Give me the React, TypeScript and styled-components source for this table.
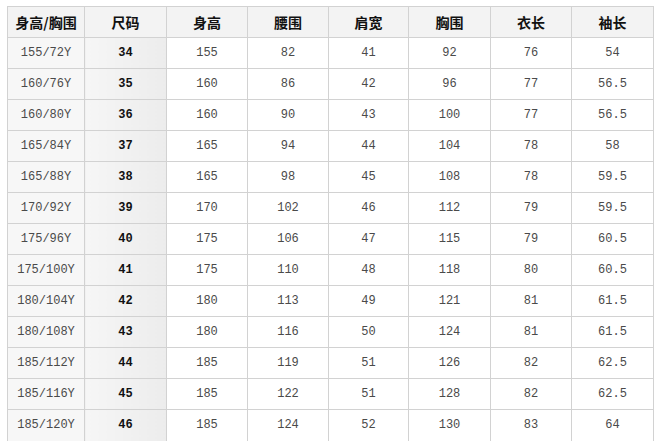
import React from "react";
import styled, { createGlobalStyle } from "styled-components";

const GlobalStyle = createGlobalStyle`
  html, body {
    margin: 0;
    padding: 0;
    background: #fff;
  }
`;

const Page = styled.div`
  width: 661px;
  height: 445px;
  overflow: hidden;
  padding: 6px 0 0 7px;
  box-sizing: border-box;
`;

const SizeTable = styled.table`
  border-collapse: collapse;
  table-layout: fixed;
  width: 646px;

  tbody tr:last-child td {
    border-bottom-color: transparent;
  }
`;

const HeadCell = styled.th`
  height: 30px;
  padding: 0;
  border: 1px solid #d2d2d2;
  background: #f3f3f3;
  color: #111;
  font-family: "Noto Sans CJK SC", "Noto Sans", sans-serif;
  font-size: 14px;
  font-weight: 700;
  text-align: center;
  vertical-align: middle;
`;

const Cell = styled.td<{ $kind?: "label" | "size" }>`
  height: 30px;
  padding: 0;
  border: 1px solid #d2d2d2;
  text-align: center;
  vertical-align: middle;
  font-family: "Liberation Mono", "DejaVu Sans Mono", monospace;
  font-size: 12px;
  font-weight: ${(p) => (p.$kind === "size" ? 700 : 400)};
  color: ${(p) => (p.$kind === "size" ? "#111" : "#4a4a4a")};
  background: ${(p) =>
    p.$kind === "label"
      ? "#f7f7f7"
      : p.$kind === "size"
      ? "linear-gradient(to right, #f6f6f6, #ececec)"
      : "#fff"};
`;

const widths = [77, 82, 81, 81, 80, 82, 81, 82];
const headers = ["身高/胸围", "尺码", "身高", "腰围", "肩宽", "胸围", "衣长", "袖长"];

const rows: string[][] = [
  ["155/72Y", "34", "155", "82", "41", "92", "76", "54"],
  ["160/76Y", "35", "160", "86", "42", "96", "77", "56.5"],
  ["160/80Y", "36", "160", "90", "43", "100", "77", "56.5"],
  ["165/84Y", "37", "165", "94", "44", "104", "78", "58"],
  ["165/88Y", "38", "165", "98", "45", "108", "78", "59.5"],
  ["170/92Y", "39", "170", "102", "46", "112", "79", "59.5"],
  ["175/96Y", "40", "175", "106", "47", "115", "79", "60.5"],
  ["175/100Y", "41", "175", "110", "48", "118", "80", "60.5"],
  ["180/104Y", "42", "180", "113", "49", "121", "81", "61.5"],
  ["180/108Y", "43", "180", "116", "50", "124", "81", "61.5"],
  ["185/112Y", "44", "185", "119", "51", "126", "82", "62.5"],
  ["185/116Y", "45", "185", "122", "51", "128", "82", "62.5"],
  ["185/120Y", "46", "185", "124", "52", "130", "83", "64"],
];

export default function App() {
  return (
    <Page>
      <GlobalStyle />
      <SizeTable>
        <colgroup>
          {widths.map((w, i) => (
            <col key={i} style={{ width: w }} />
          ))}
        </colgroup>
        <thead>
          <tr>
            {headers.map((h) => (
              <HeadCell key={h}>{h}</HeadCell>
            ))}
          </tr>
        </thead>
        <tbody>
          {rows.map((r) => (
            <tr key={r[0]}>
              {r.map((v, i) => (
                <Cell key={i} $kind={i === 0 ? "label" : i === 1 ? "size" : undefined}>
                  {v}
                </Cell>
              ))}
            </tr>
          ))}
        </tbody>
      </SizeTable>
    </Page>
  );
}
